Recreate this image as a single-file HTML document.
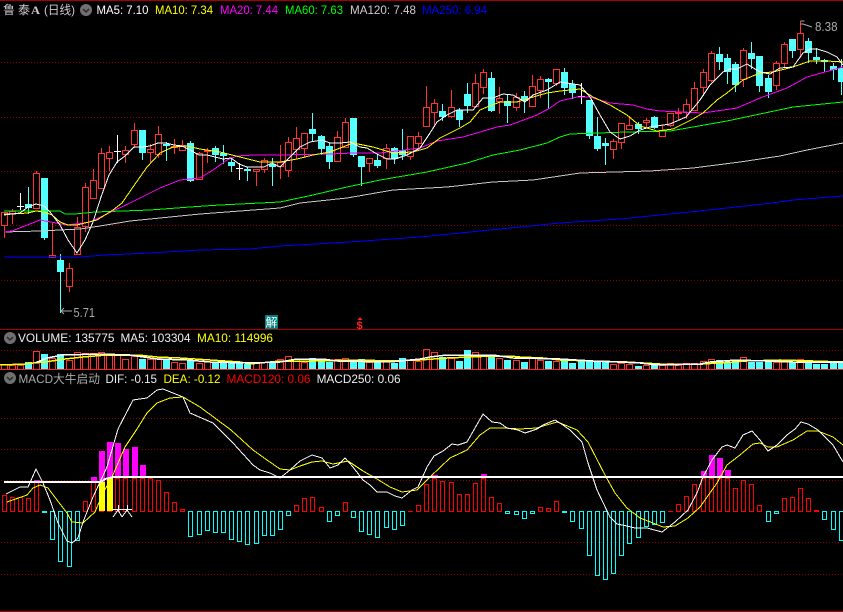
<!DOCTYPE html>
<html><head><meta charset="utf-8">
<style>
html,body{margin:0;padding:0;background:#000;width:843px;height:612px;overflow:hidden}
svg{display:block;position:absolute;left:0;top:0}
text{font-family:"Liberation Sans","Noto Sans CJK SC",sans-serif;font-size:12px}
</style></head><body>
<svg id="s" width="843" height="612" viewBox="0 0 843 612" xmlns="http://www.w3.org/2000/svg">
<rect width="843" height="612" fill="#000"/>
<g shape-rendering="crispEdges">
<rect x="0" y="0" width="843" height="1" fill="#a80000"/>
<rect x="0" y="329" width="843" height="1" fill="#a80000"/>
<rect x="0" y="611" width="843" height="1" fill="#a80000"/>
<g stroke="#8c0000" stroke-dasharray="1 2" fill="none">
<path d="M1 62.5H843M1 117.5H843M1 171.5H843M1 225.5H843M1 280.5H843M1 350.5H843M1 418.5H843M1 449.5H843M1 480.5H843M1 542.5H843M1 574.5H843"/>
</g>
<g id="shapes"></g>
</g>
<!-- title row -->
<text x="3" y="14" fill="#ccc">鲁</text><text x="18" y="14" fill="#ccc">泰</text><text x="31" y="14" fill="#ccc" font-weight="bold" style="font-family:'Liberation Serif',serif" textLength="9" lengthAdjust="spacingAndGlyphs">A</text>
<text x="44" y="14" fill="#ccc" textLength="31" lengthAdjust="spacingAndGlyphs">(日线)</text>
<circle cx="86" cy="10" r="6" fill="#707070"/><path d="M83 9l3 3 3-3" fill="none" stroke="#2a2a2a" stroke-width="1.5"/>
<text x="96.5" y="14" fill="#fff" textLength="52" lengthAdjust="spacingAndGlyphs">MA5: 7.10</text>
<text x="155" y="14" fill="#ff0" textLength="58" lengthAdjust="spacingAndGlyphs">MA10: 7.34</text>
<text x="220" y="14" fill="#f0f" textLength="58" lengthAdjust="spacingAndGlyphs">MA20: 7.44</text>
<text x="285" y="14" fill="#0f0" textLength="58" lengthAdjust="spacingAndGlyphs">MA60: 7.63</text>
<text x="350" y="14" fill="#ccc" textLength="66" lengthAdjust="spacingAndGlyphs">MA120: 7.48</text>
<text x="422" y="14" fill="#00f" textLength="65" lengthAdjust="spacingAndGlyphs">MA250: 6.94</text>
<!-- volume row -->
<circle cx="10" cy="338" r="6" fill="#707070"/><path d="M7 337l3 3 3-3" fill="none" stroke="#2a2a2a" stroke-width="1.5"/>
<text x="18" y="342" fill="#eee" textLength="96.5" lengthAdjust="spacingAndGlyphs">VOLUME: 135775</text>
<text x="120.5" y="342" fill="#eee" textLength="70" lengthAdjust="spacingAndGlyphs">MA5: 103304</text>
<text x="197" y="342" fill="#ff0" textLength="76" lengthAdjust="spacingAndGlyphs">MA10: 114996</text>
<!-- macd row -->
<circle cx="10" cy="378" r="6" fill="#707070"/><path d="M7 377l3 3 3-3" fill="none" stroke="#2a2a2a" stroke-width="1.5"/>
<text x="18.5" y="383" fill="#aaa" textLength="81.5" lengthAdjust="spacingAndGlyphs">MACD大牛启动</text>
<text x="105.5" y="383" fill="#eee" textLength="51.5" lengthAdjust="spacingAndGlyphs">DIF: -0.15</text>
<text x="163.5" y="383" fill="#ff0" textLength="57" lengthAdjust="spacingAndGlyphs">DEA: -0.12</text>
<text x="226.5" y="383" fill="#f00" textLength="84" lengthAdjust="spacingAndGlyphs">MACD120: 0.06</text>
<text x="316.6" y="383" fill="#eee" textLength="84" lengthAdjust="spacingAndGlyphs">MACD250: 0.06</text>
<!-- price labels -->
<path d="M61 311H72M61 311l3-3M61 311l3 3" stroke="#aaa" fill="none"/>
<text x="73.5" y="317" fill="#aaa" style="font-size:13px" textLength="21.5" lengthAdjust="spacingAndGlyphs">5.71</text>
<path d="M800.5 21h4M800.5 24h3M803 24l9 3" stroke="#aaa" fill="none"/>
<text x="815" y="31" fill="#aaa" style="font-size:13px" textLength="22.5" lengthAdjust="spacingAndGlyphs">8.38</text>
<rect x="265" y="315" width="13" height="14" fill="#008080"/>
<text x="265.5" y="326.5" fill="#fff">解</text>
<path d="M360 317l2.5 3h-5z" fill="#f22"/>
<text x="356.5" y="329" fill="#f22" style="font-size:11px" font-weight="bold">$</text>
</svg>
<script>
(function(){
var R='#ff3232',C='#54ffff';
var cd="r 4 212 225 212 237;r 12 211 213 209 223;w 20 206 206 193 209;c 28 204 208 187 213;r 36 173 208 171 208;c 44 178 238 178 239;r 52 255 257 222 257;c 60 260 272 254 312;r 69 268 286 263 291;r 77 227 254 217 254;r 85 187 226 183 231;r 93 180 198 169 198;r 101 153 188 148 188;r 109 152 158 146 170;w 117 151 151 135 162;r 125 150 154 146 162;r 134 130 144 123 147;c 142 130 153 130 159;r 150 149 152 144 163;r 158 134 154 126 157;c 166 144 146 142 160;r 174 146 147 139 153;r 182 145 150 140 150;c 190 143 181 141 181;r 199 153 179 152 179;r 207 150 151 148 162;c 215 148 155 146 161;c 223 153 156 145 163;c 231 162 166 158 171;w 239 168 168 163 179;c 247 169 171 167 180;r 256 169 171 169 185;r 264 160 169 158 172;c 272 164 167 158 185;r 280 162 166 145 178;r 288 142 170 137 176;r 296 138 149 127 158;r 304 133 148 133 157;c 312 129 134 113 141;c 321 136 149 135 154;c 329 146 162 143 168;r 337 137 161 131 161;r 345 122 147 118 147;c 353 118 155 118 156;c 361 156 167 156 185;r 369 158 163 158 171;c 377 160 166 154 167;r 386 148 158 144 168;c 394 148 159 147 163;c 402 150 155 129 159;r 410 136 156 136 159;r 418 136 143 132 150;r 426 107 126 86 126;r 434 103 112 99 126;c 442 111 117 104 120;r 451 107 116 90 117;c 459 110 120 108 126;c 467 94 106 83 112;r 475 83 106 74 106;r 483 72 87 69 93;c 491 78 111 72 111;r 499 98 101 87 113;c 507 101 106 95 122;r 516 97 107 93 110;c 524 96 101 91 112;r 532 86 106 75 106;r 540 79 90 76 97;c 548 79 82 78 108;r 556 69 83 69 85;c 564 72 88 68 94;c 572 84 93 80 98;w 581 96 96 83 103;c 589 100 136 100 138;c 597 136 149 117 150;c 605 143 146 138 164;r 613 141 149 139 158;r 621 123 142 123 148;r 629 125 129 117 129;c 638 124 129 122 133;r 646 120 122 118 127;c 654 117 128 116 128;r 662 130 136 125 136;r 670 113 125 113 126;r 678 112 113 108 119;r 686 104 112 99 118;r 694 88 110 82 110;r 703 72 87 69 95;r 711 53 80 51 81;c 719 54 62 47 69;c 727 58 72 54 83;c 735 64 85 62 91;r 743 50 79 48 86;c 751 53 59 42 68;c 759 56 86 56 91;c 768 78 92 75 97;r 776 63 85 61 89;r 784 44 63 42 67;c 792 39 51 39 57;r 800 33 49 21 57;c 808 41 53 38 62;c 816 57 60 48 63;c 824 60 61 59 71;c 833 66 70 63 79;c 841 68 82 59 94".split(';').map(function(s){var p=s.split(' ');return {t:p[0],x:+p[1],a:+p[2],b:+p[3],h:+p[4],l:+p[5]}});
var vol=[364,365,365,362,351,354,358,354,360,352,353,353,352,354,354,359,356,359,359,358,360,362,363,361,363,361,362,363,363,363,364,362,362,362,359,356,359,362,358,361,362,359,358,360,359,362,361,361,363,358,360,361,349,352,357,358,361,350,352,356,355,358,360,360,362,358,360,361,361,360,363,361,361,362,362,364,363,364,366,365,365,365,363,365,363,363,361,359,360,362,361,357,362,362,362,362,361,362,359,361,364,364,363,362];
var vc={};
var vcyan=[3,5,7,17,20,23,26,27,28,29,30,33,38,39,40,43,44,46,48,49,54,56,57,60,62,64,67,69,70,71,72,73,74,78,80,88,89,90,92,93,94,97,99,100,101,102,103];
vcyan.forEach(function(i){vc[i]=1});
var macd=[495,497,497,498,480,512,539,561,566,540,501,480,482,478,478,478,478,478,478,480,492,502,509,536,534,530,532,532,539,541,544,543,535,535,529,515,505,498,497,507,521,515,502,517,531,534,537,527,529,525,511,505,484,478,481,482,494,494,483,478,497,503,513,514,518,513,507,508,501,512,521,528,555,575,579,573,555,543,537,526,524,522,511,504,496,484,478,478,478,478,488,480,484,505,521,513,498,497,488,498,510,519,529,540];
var ov=[[4,480,483,'#f0f'],[11,477,483,'#f0f'],[12,451,482,'#f0f'],[12,482,511,'#ff0'],[13,442,478,'#f0f'],[13,478,511,'#ff0'],[14,443,478,'#f0f'],[15,449,478,'#f0f'],[16,447,478,'#f0f'],[17,465,478,'#f0f'],[53,475,478,'#f0f'],[59,474,478,'#f0f'],[86,471,478,'#f0f'],[87,455,478,'#f0f'],[88,458,478,'#f0f'],[89,470,478,'#f0f']];
var h='';
function L(d,c,w){h+='<path d="'+d+'" fill="none" stroke="'+c+'"'+(w?' stroke-width="'+w+'"':'')+'/>'}
function P(p,c,w){h+='<polyline points="'+p+'" fill="none" stroke="'+c+'"'+(w?' stroke-width="'+w+'"':'')+'/>'}
/* candles */
cd.forEach(function(k){
 var x=k.x+.5;
 if(k.t=='c'){
  L('M'+x+' '+k.h+'V'+(k.l+1),C);
  h+='<rect x="'+(k.x-3)+'" y="'+k.a+'" width="7" height="'+Math.max(k.b-k.a,2)+'" fill="'+C+'"/>';
 }else if(k.t=='r'){
  if(k.h<k.a)L('M'+x+' '+k.h+'V'+k.a,R);
  if(k.l>k.b)L('M'+x+' '+k.b+'V'+(k.l+1),R);
  h+='<rect x="'+(k.x-2.5)+'" y="'+(k.a+.5)+'" width="6" height="'+Math.max(k.b-k.a,1)+'" fill="none" stroke="'+R+'"/>';
 }else{
  L('M'+x+' '+k.h+'V'+(k.l+1)+'M'+(k.x-3)+' '+(k.a+.5)+'h7','#fff');
 }
});
/* price MAs */
P("4,232 40,231 60,230 80,229 100,226 130,221 170,217 200,214 240,211 280,208 300,203 347,198 393,190 447,187 493,182 533,180 560,176 580,173 650,171 693,168 740,162 780,156 807,150 843,143",'#c8c8c8');
P("4,257 80,257 105,255 150,253 200,250 250,249 280,246 350,242 420,237 500,229 560,223 620,219 700,211 772,203 793,200 843,196",'#0000ff');
P("4,211 60,211 65,214 75,214 95,212 150,210 190,207 220,205 280,202 313,195 347,187 380,180 427,172 467,163 493,155 520,150 547,143 560,137 570,134 627,132 670,131 693,127 727,121 760,114 793,107 843,102",'#00ff00');
P("4,232 12,231 40,220 67,225 90,222 113,211 130,203 160,188 180,180 200,178 213,170 227,160 237,156 253,155 280,155 330,154 353,153 380,153 420,148 437,141 463,137 480,132 497,127 510,125 537,115 550,108 560,101 577,97 590,97 610,103 633,105 647,109 660,111 703,113 737,108 760,98 787,88 807,77 843,67",'#ff00ff');
P("4,215 12,214 28,213 36,211 44,212 52,215 60,222 68,225 77,225 97,220 113,210 122,203 133,187 147,167 160,153 173,147 187,146 200,149 220,152 240,157 260,162 280,162 297,159 313,155 330,152 353,143 373,147 393,153 413,152 427,148 440,138 460,128 470,122 480,110 487,107 500,102 517,102 533,97 547,93 560,91 580,89 593,97 610,105 627,115 640,126 657,131 673,129 693,119 703,113 717,100 727,93 743,80 760,73 773,72 793,67 810,61 827,61 843,62",'#ffff00');
P("4,214 12,214 20,213 28,207 36,204 44,206 50,212 60,225 68,240 77,253 85,240 93,222 101,197 109,175 117,162 125,156 134,147 142,147 150,146 158,143 166,143 174,145 182,146 190,150 199,155 207,155 215,157 223,159 231,158 239,164 247,167 256,167 264,167 272,163 280,167 290,157 300,147 310,142 322,140 330,143 340,143 350,142 360,147 367,148 377,154 387,159 395,159 407,155 420,148 430,133 437,122 447,115 457,110 473,110 483,98 493,98 503,94 513,95 525,102 533,95 547,90 560,82 580,85 590,97 600,115 610,132 620,139 630,136 640,130 650,127 670,124 686,117 700,100 710,85 723,72 730,69 737,69 747,64 760,72 770,74 780,68 793,67 803,53 810,49 817,49 827,52 837,57 843,65",'#ffffff');
/* volume */
cd.forEach(function(k,i){
 var t=vol[i];
 if(vc[i])h+='<rect x="'+(k.x-3)+'" y="'+t+'" width="7" height="'+(369-t)+'" fill="'+C+'"/>';
 else h+='<rect x="'+(k.x-2.5)+'" y="'+(t+.5)+'" width="6" height="'+(369-t)+'" fill="none" stroke="'+R+'"/>';
});
h+='<rect x="0" y="369" width="843" height="1" fill="#ff2020"/>';
P("0,365 25,364 33,363 45,362 65,359 83,357 107,355 138,355 157,357 180,358 210,360 240,362 250,364 280,361 310,361 360,360 390,361 420,360 447,358 493,356 510,356 520,357 543,358 560,360 593,361 627,362 660,364 703,364 747,361 780,360 813,361 843,362",'#ffff00',1.5);
P("35,363 47,358 63,355 100,354 130,355 157,359 187,360 210,362 250,363 280,362 297,359 323,359 337,361 390,362 420,359 430,357 447,355 493,355 513,358 560,359 593,361 617,362 640,363 657,365 700,364 710,362 737,360 793,362 843,362",'#ffffff',1.5);
/* macd bars */
cd.forEach(function(k,i){
 var v=macd[i],x=k.x-1.5;
 if(i==5||i==69){h+='<rect x="'+(k.x-2)+'" y="511" width="5" height="2" fill="#0ff"/>';return}
 if(i==100){h+='<rect x="'+(k.x-2)+'" y="510" width="5" height="2" fill="#f00"/>';return}
 if(v==511){h+='<rect x="'+(k.x-2)+'" y="511" width="5" height="1" fill="#f00"/>';return}
 if(v<511)h+='<rect x="'+x+'" y="'+(v+.5)+'" width="4" height="'+(511-v)+'" fill="none" stroke="#f00"/>';
 else h+='<rect x="'+x+'" y="511.5" width="4" height="'+(v-511)+'" fill="none" stroke="#0ff"/>';
});
ov.forEach(function(o){var k=cd[o[0]];h+='<rect x="'+(k.x-2)+'" y="'+o[1]+'" width="6" height="'+(o[2]-o[1])+'" fill="'+o[3]+'"/>'});
/* cross marks */
L('M113 509.5H132M118.5 505V511M127.5 505V511M118 510L113 517M118 510L122 517M127 510L122 517M127 510L132 517','#fff');
/* DIF / DEA */
P("7,502 27,495 33,488 40,485 48,488 57,500 67,513 72,522 83,523 95,512 103,493 112,477 125,447 137,429 147,413 157,403 170,398 183,397 200,407 231,430 253,450 267,460 280,469 290,470 300,466 312,462 322,461 333,464 348,461 363,471 377,479 390,487 402,492 417,490 430,477 450,458 467,450 480,435 490,428 503,428 520,429 537,428 543,426 557,422 560,423 577,430 588,442 605,475 615,493 627,508 640,518 653,523 663,527 675,526 688,518 700,507 717,483 727,465 740,455 753,444 760,443 768,447 777,447 793,440 807,431 818,431 833,437 843,445",'#ffff00');
P("6,494 20,487 28,487 36,469 43,483 50,500 58,523 67,541 72,543 78,538 83,522 93,497 107,467 118,429 133,400 147,398 157,390 163,389 183,397 190,413 213,423 220,430 233,443 253,465 260,470 270,473 280,478 290,470 300,461 312,455 322,458 330,468 338,465 345,458 353,467 363,480 370,485 377,492 387,492 395,496 402,498 412,490 418,487 427,467 434,456 443,451 452,444 458,445 467,442 475,428 483,414 492,422 500,423 507,428 518,430 525,433 537,429 543,425 555,420 560,423 570,430 582,442 588,463 597,490 610,517 617,524 627,526 635,528 647,528 662,532 675,522 688,510 697,493 703,477 712,460 722,447 727,445 735,448 743,435 752,431 760,440 768,451 777,445 787,435 795,429 801,422 808,424 818,430 833,445 843,462",'#ffffff');
P("4,482 101,482 105,479 113,477 843,477",'#ffffff',2);
document.getElementById('shapes').innerHTML=h;
})();
</script>
</body></html>
